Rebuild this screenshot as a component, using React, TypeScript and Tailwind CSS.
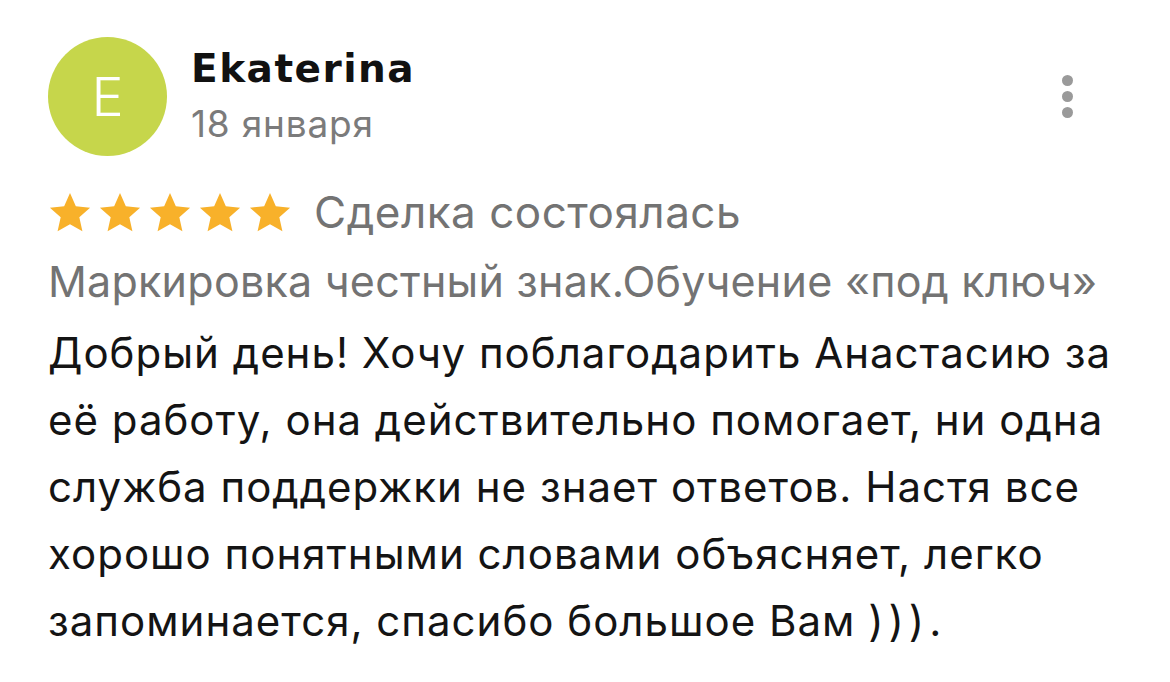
import React from "react";

const Star = () => (
  <svg width="44" height="42" viewBox="0 0 24 23" className="shrink-0">
    <path d="M12 0.6l3.2 7.2 7.8.8-5.9 5.2 1.7 7.7L12 17.6l-6.8 3.9 1.7-7.7L1 8.6l7.8-.8z" fill="#f8b12a" />
  </svg>
);

const lines = [
  "Добрый день! Хочу поблагодарить Анастасию за",
  "её работу, она действительно помогает, ни одна",
  "служба поддержки не знает ответов. Настя все",
  "хорошо понятными словами объясняет, легко",
];

export default function App() {
  return (
    <div className="w-[1170px] h-[682px] bg-white overflow-hidden" style={{ fontFamily: "Inter, Roboto, 'Liberation Sans', sans-serif" }}>
      <div className="pl-[48px] pr-[40px] pt-[37px]">
        <div className="flex items-start">
          <div className="w-[119px] h-[119px] rounded-full bg-[#c6d64b] flex items-center justify-center shrink-0">
            <span className="text-white text-[54px] font-light leading-none">E</span>
          </div>
          <div className="ml-[24px] flex-1 pt-[11px]">
            <div
              className="text-[39px] font-bold leading-[42px] text-[#111] tracking-[1.5px]"
              style={{ fontFamily: "'DejaVu Sans', Inter, sans-serif" }}
            >
              Ekaterina
            </div>
            <div className="text-[37px] leading-[42px] text-[#7b7b7b] mt-[13px] tracking-[0.8px]">18 января</div>
          </div>
          <div className="flex flex-col gap-[5px] mt-[38px] mr-[57px]">
            <div className="w-[11px] h-[11px] rounded-full bg-[#9a9a9a]" />
            <div className="w-[11px] h-[11px] rounded-full bg-[#9a9a9a]" />
            <div className="w-[11px] h-[11px] rounded-full bg-[#9a9a9a]" />
          </div>
        </div>
        <div className="flex items-center mt-[31px] h-[50px]">
          <div className="flex gap-[6px] pt-[1px]">
            <Star /><Star /><Star /><Star /><Star />
          </div>
          <span className="ml-[22px] text-[44px] text-[#737373] leading-[50px] tracking-[0.5px]">Сделка состоялась</span>
        </div>
        <div className="text-[43px] text-[#737373] leading-[50px] mt-[19px] whitespace-nowrap tracking-[0.25px]">
          Маркировка честный знак.Обучение «под ключ»
        </div>
        <div className="text-[42px] text-[#141414] leading-[67px] mt-[13px] whitespace-nowrap tracking-[1px]">
          {lines.map((l) => (
            <div key={l}>{l}</div>
          ))}
          <div>
            запоминается, спасибо большое Вам <span className="tracking-[5px]">)))</span>.
          </div>
        </div>
      </div>
    </div>
  );
}
